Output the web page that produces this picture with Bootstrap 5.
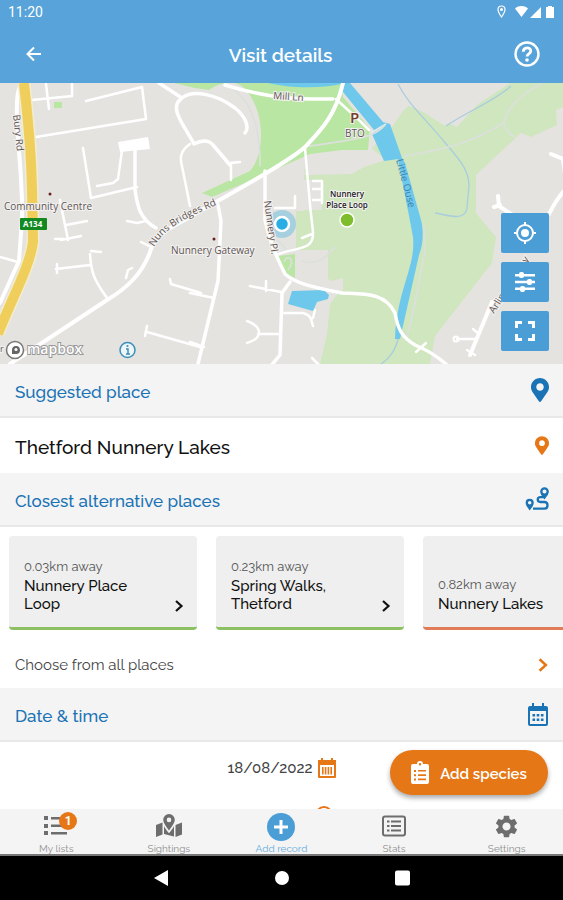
<!DOCTYPE html>
<html lang="en">
<head>
<meta charset="utf-8">
<meta name="viewport" content="width=device-width, initial-scale=1">
<title>Visit details</title>
<link href="https://cdn.jsdelivr.net/npm/bootstrap@5.3.0/dist/css/bootstrap.min.css" rel="stylesheet">
<style>
:root{--sky:#57a3da;--deep:#1a73b5;--orange:#e67717;--ink:#111}
body{font-family:Raleway,"Noto Sans",sans-serif;color:var(--ink);font-size:15px}
svg{display:block;flex-shrink:0}
.app-head{background:var(--sky);color:#fff}
.status-line{height:24px;font:14px Roboto,sans-serif}
.tool-line{height:59px;padding:0 18px 0 16px}
.tool-line h1{font-size:19px;font-weight:600;line-height:24px;padding-top:2px}
.tool-line .btn{color:#fff;border:0}
.map-area{height:281px;background:#e5e3e0}
.map-area text{font-family:"Open Sans",sans-serif;font-size:10px;fill:#5d5555;stroke:#f3f1ef;stroke-width:2px;paint-order:stroke}
.map-tools{top:130px;right:14px;gap:9px}
.map-tools .btn{width:48px;height:40px;background:#4b9dd5;border:0;border-radius:2px;color:#fff}
.side-pad{padding-left:15px;padding-right:14px}
.sect{height:54px;background:#f4f4f4;border-bottom:2px solid #e8e8e8;color:var(--deep)}
.sect h2{font-size:17px;font-weight:500;line-height:24px;padding-top:4px}
.pick-row{height:55px;font-size:19px;font-weight:500}
.pick-row span{padding-top:4px}
.places{gap:19px;padding:9px 9px 12px}
.place{width:188px;height:94px;padding:0 13px 14px 15px;background:#efefef;border-bottom:3px solid #8dc063;border-radius:4px;color:var(--ink);line-height:18px}
.place.far{border-bottom-color:#e07c58}
.place small{font-size:13px;line-height:20px;color:#555}
.place strong{font-size:15px;font-weight:500}
.all-row{height:46px;color:#444}
.date-row{height:52px}
.date-row .btn,.time-row .btn{color:#444;font-size:15px;font-weight:500;gap:5px;border:0}
.time-row{padding-top:12px}
.time-row span{width:80px}
.add-btn{right:15px;bottom:14px;width:158px;height:45px;background:var(--orange);color:#fff;font-size:15px;font-weight:600;box-shadow:0 3px 5px #0005;gap:11px}
.add-btn span{padding-top:3px}
.add-btn:hover{background:#d56c10;color:#fff}
.tabs-bar{height:47px;background:#f4f4f4;border-bottom:2px solid #777}
.tabs-bar a{font-size:10px;line-height:10px;color:#909090;text-decoration:none}
.tabs-bar a svg{color:#6d6d6d}
.tabs-bar a.on{color:#67addd}
.count{left:16px;top:-1px;width:18px;height:18px;background:var(--orange);color:#fff;font:bold 12px/18px Roboto,sans-serif}
.sys-bar{height:44px;background:#000}
</style>
</head>
<body>
<svg width="0" height="0" class="position-absolute" aria-hidden="true"><defs>
<symbol id="pin" viewBox="0 0 384 512"><path fill="currentColor" d="M172.268 501.67C26.97 291.031 0 269.413 0 192 0 85.961 85.961 0 192 0s192 85.961 192 192c0 77.413-26.97 99.031-172.268 309.67-9.535 13.774-29.93 13.773-39.464 0zM192 272c44.183 0 80-35.817 80-80s-35.817-80-80-80-80 35.817-80 80 35.817 80 80 80z"/></symbol>
<symbol id="chev" viewBox="0 0 10 14"><path d="M2 2l5.500 5L2 12" fill="none" stroke="currentColor" stroke-width="2.200"/></symbol>
</defs></svg>
<div class="d-flex flex-column vh-100 overflow-hidden">
<header class="app-head">
  <div class="status-line d-flex align-items-center justify-content-between ps-2 pe-1">
    <span>11:20</span>
    <svg width="62" height="16" viewBox="0 0 62 16" fill="#fff"><path d="M4.500 2C2.300 2 1 3.600 1 5.500c0 2.600 3.500 7.500 3.500 7.500S8 8.100 8 5.500C8 3.600 6.700 2 4.500 2z" fill="none" stroke="#fff" stroke-width="1.200"/><circle cx="4.500" cy="5.600" r="1.500"/><path d="M18 4.500c4-3.200 9-3.200 13 0L24.500 13zM33 14L44 3v11zM49 3h2V2h4v1h2v11h-8z"/></svg>
  </div>
  <div class="tool-line d-flex align-items-center justify-content-between">
    <button class="btn p-2" aria-label="Back"><svg width="20" height="20" viewBox="0 0 20 20" fill="none" stroke="currentColor" stroke-width="2"><path d="M17 10H4M10 3.500L3.500 10l6.500 6.500"/></svg></button>
    <h1 class="mb-0">Visit details</h1>
    <button class="btn p-1" aria-label="Help"><svg width="28" height="28" viewBox="0 0 28 28" fill="none" stroke="currentColor"><circle cx="14" cy="14" r="11.500" stroke-width="2.400"/><path d="M10.300 11.800c0-5.300 7.600-5 7.400-.7-.1 2.800-3.600 2.700-3.600 5.300" stroke-width="2.800"/><circle cx="14" cy="20" r="1.800" fill="currentColor" stroke="none"/></svg></button>
  </div>
</header>
<section class="map-area position-relative flex-shrink-0 overflow-hidden" aria-label="Map">
<svg width="100%" height="100%" viewBox="0 83 563 281" preserveAspectRatio="xMidYMid slice">
  <path fill="#e5e3e0" d="M-400 83h1400v281H-400z"/>
  <path fill="#cfe6bf" d="M563 83v24l-7 3 1 15-26 12-10-4-45 42 0 38 20 24-4 26-57 73-5 28H320l7-30 3-30 12-16-15-10-31-4V211h8V169l56-9 30-30 17-25 50 22 40-44z"/>
  <path fill="#e5e3e0" d="M352 83h158l-65 43-34-22-24 20zM310 154l60-7 16 13-22 7-12 7-48 1zM328 282l15-4v15h-15zM304 180h18v30h-18z"/>
  <path fill="#e5e3e0" d="M295 250h33v42l-20-8-13-10z"/>
  <path fill="#b9e6a2" d="M174 83h168l1 14 27 32-2 21-26 0-32 4-40 18-58 25-10-4 48-22c17-20 14-65-7-84-8-7-24-5-34 3l-14-2zM278 256l17-2v24l-8-4zM54 102h8v6h-8z"/>
  <path fill="#6dc8ec" d="M268 83h82l33 39 7 2 12 34 3 5 16 57c3 12 2 25-2 35l-19 84h-5c2-50 21-72 18-102-3-18-10-51-15-78l-14 2-12-27 2-4-31-38-2-8c-22 5-52 4-73-1zM292 291l32-1 5 5-1 4-11 3-4 9-25-7z"/>
  <path d="M371 133l15-9" stroke="#e1ebee" stroke-width="2"/>
  <g fill="none" stroke="#a9cddd" stroke-width="1.300"><path d="M398 84c10 20 26 33 49 61 15 17 22 27 22 41l-2 22c-2 14-19 7-32 5M511 86c-18 16-43 25-65 40M398 339c-3 12-8 19-18 26"/></g>
  <g fill="none" stroke="#dce0dc" stroke-width="1.800"><path d="M542 84c-23 10-34 25-38 37 0 8 6 14 12 16M303 147c64-9 70-10 82-22M404 156c50-8 72-16 101-34M424 225l1 27c-7 30-8 50-18 84M225 84c30 15 35 50 35 82M302 261c15 4 22-2 27-8l6-6M284 262c4-10 12-1 4 8M273 240c8 1 12 6 13 12"/></g>
  <g fill="none" stroke="#fff" stroke-linejoin="round" stroke-linecap="round">
    <path stroke-width="4" d="M20 87c-9 14 4 90 2 132l-3 42L0 303M343 83c-8 35-25 50-38 64-20 18-83 51-115 70-20 11-35 17-40 35-8 22-23 36-43 48L10 364"/>
    <path stroke-width="3.500" d="M159 83l23 15c10-8 33-5 53 10 10 8 15 19 10 25M225 85c29 9 56 14 86 14h22M265 171v49c4 17 8 30 20 54 10 9 26 13 57 19 21 1 43-1 53 20M395 313c3 17 7 24 20 32 10 4 22 11 32 20M218 205l3 16-3 60-20 83M181 99c-13 9 5 29 13 45 8-4 15-4 19 1l17 20M135 150v40c2 12 3 28 21 38M290 282l-8 11-2 62-10 12"/>
    <path stroke-width="2.500" d="M336 99l24 22 9 9M305 148l5 57 3 27c1 19-16 15-34 22M83 148l8 50 46-11M60 200l8 40M122 150l-4 29-5 4-16 3M36 137l110-18-4-32-56 14M22 101l50-5V84M46 84l3 25M90 254c1 18 4 26 17 44M56 269l34-4M61 240l20-4M66 225l21-4M91 251l10 1M190 144c-13 9-9 18-7 27l7 35M171 284l-1-5 1 5 30 9M145 336l2-10M147 332l53 15M190 293l24 5M190 342l14 5M250 286l31 6M266 281v10M247 321c16 6 16 17 0 22M258 334h22M283 313h20c8 2 8 6 10 13M313 318l2-8M0 257l18 5M302 238l10-4M295 208v-12M275 208l20 0M230 163l10-1M231 164v16M127 221l10 2 9-2M126 278l2-8 4-2M141 242l8 4M313 181h9v22M313 189h9M313 200h9M312 358l8 8M63 239h-8M57 273v-9"/>
    <path stroke-width="4" d="M498 196l1 10 12 8M494 207l6-2M549 214c6-12 10-18 16-24M551 154l12 5 2 14M492 302l-22 53"/>
    <path stroke-width="2.500" d="M416 352l10-9M457 339h20M473 329l6 5M467 350l8 5"/><circle cx="456" cy="339" r="2.500" stroke-width="2"/>
  </g>
  <path fill="#fff" d="M118 142l30-5 2 12-30 3z"/>
  <path d="M24 83c8 72 8 94 9 159-3 25-23 60-35 92" fill="none" stroke="#f3edcf" stroke-width="13"/><path d="M24 83c8 72 8 94 9 159-3 25-23 60-35 92" fill="none" stroke="#efce5c" stroke-width="10"/>
  <text x="4" y="210">Community Centre</text><circle cx="50" cy="194" r="1.500" fill="#622"/>
  <text transform="translate(13 115) rotate(84)">Bury Rd</text>
  <rect x="20" y="218" width="27" height="12" rx="1" fill="#138a21"/><text x="23" y="227" style="font-size:8px;font-weight:700;fill:#fff;stroke:none">A134</text>
  <path id="nuns" fill="none" d="M154 247c10-18 28-28 72-46"/><text><textPath href="#nuns">Nuns Bridges Rd</textPath></text>
  <text x="171" y="254">Nunnery Gateway</text><circle cx="214" cy="239" r="1.500" fill="#622"/>
  <text transform="translate(273 99) rotate(4)">Mill Ln</text>
  <circle cx="282" cy="224" r="14" fill="#73c1de" opacity=".55"/>
  <text transform="translate(264 201) rotate(82)">Nunnery Pl.</text>
  <text x="350" y="123" style="font-size:15px;font-weight:600;fill:#713d25">P</text><text x="345" y="137">BTO</text>
  <text transform="translate(396 160) rotate(75)" style="fill:#3e82ad;stroke:none">Little Ouse</text>
  <text transform="translate(494 314) rotate(-57)">Arlington Way</text>
  <text x="347" y="197" text-anchor="middle" style="font-size:8px;font-weight:600;fill:#222">Nunnery</text><text x="347" y="208" text-anchor="middle" style="font-size:8px;font-weight:600;fill:#222">Place Loop</text>
  <circle cx="347" cy="220" r="7" fill="#7ebd2b" stroke="#fff" stroke-width="1.500"/>
  <circle cx="282" cy="224" r="7" fill="#28aee5" stroke="#fff" stroke-width="2.500"/>
  <text x="0" y="352" style="font-size:9px">r</text><circle cx="15" cy="350" r="8.500" fill="#fff" stroke="#777" stroke-width="1.500"/><path d="M12 354v-4.500a4 4 0 1 1 4 4.500z" fill="#666"/><circle cx="16" cy="349.500" r="1.500" fill="#fff"/>
  <text x="27" y="354" style="font-size:14px;font-weight:600;fill:#fff;stroke:#999">mapbox</text>
  <circle cx="127.500" cy="350" r="7.500" fill="#eef5f7" stroke="#3c8fb9" stroke-width="1.500"/><path d="M126 349h2v5m-2 0h4" fill="none" stroke="#3c8fb9" stroke-width="1.500"/><circle cx="127.500" cy="346" r="1.100" fill="#3c8fb9"/>
</svg>
<div class="map-tools position-absolute d-flex flex-column">
  <button class="btn p-0 d-flex align-items-center justify-content-center" aria-label="My location"><svg width="24" height="24" viewBox="0 0 24 24" fill="none" stroke="currentColor" stroke-width="2"><circle cx="12" cy="12" r="8"/><circle cx="12" cy="12" r="4" fill="currentColor" stroke="none"/><path d="M12 1v4M12 19v4M1 12h4M19 12h4"/></svg></button>
  <button class="btn p-0 d-flex align-items-center justify-content-center" aria-label="Map layers"><svg width="24" height="24" viewBox="0 0 24 24" fill="currentColor"><path d="M2 4h20v2.500H2zM2 10.800h20v2.500H2zM2 17.500h20V20H2z"/><rect x="6" y="2" width="5" height="6" rx="2"/><rect x="14" y="9" width="5" height="6" rx="2"/><rect x="7" y="16" width="5" height="6" rx="2"/></svg></button>
  <button class="btn p-0 d-flex align-items-center justify-content-center" aria-label="Full screen"><svg width="24" height="24" viewBox="0 0 24 24" fill="none" stroke="currentColor" stroke-width="3"><path d="M3.500 9V3.500H9M15 3.500h5.500V9M20.500 15v5.500H15M9 20.500H3.500V15"/></svg></button>
</div>
</section>
<main class="position-relative flex-grow-1 overflow-hidden">
  <div class="sect side-pad d-flex align-items-center justify-content-between"><h2 class="mb-0">Suggested place</h2><svg width="18" height="24"><use href="#pin"/></svg></div>
  <div class="pick-row side-pad d-flex align-items-center justify-content-between"><span>Thetford Nunnery Lakes</span><svg width="14" height="19" color="#e67717"><use href="#pin"/></svg></div>
  <div class="sect side-pad d-flex align-items-center justify-content-between"><h2 class="mb-0">Closest alternative places</h2><svg width="24" height="26" viewBox="2 0 24 26" fill="none" stroke="currentColor" stroke-width="2.300"><circle cx="21.500" cy="5.500" r="3.200"/><path d="M18.700 7.500l2.800 4 2.800-4M4.300 19l2.400 3.500L9.100 19"/><circle cx="6.700" cy="16.700" r="2.900"/><path d="M21.500 11.200h-4c-3.700 0-3.700 4.800 0 4.800h3.800c4.300 0 4.300 6.700 0 6.700H10"/></svg></div>
  <div class="places d-flex overflow-hidden">
    <a href="#" class="place flex-shrink-0 d-flex align-items-end justify-content-between text-decoration-none"><span><small class="d-block">0.03km away</small><strong>Nunnery Place<br>Loop</strong></span><svg width="10" height="14"><use href="#chev"/></svg></a>
    <a href="#" class="place flex-shrink-0 d-flex align-items-end justify-content-between text-decoration-none"><span><small class="d-block">0.23km away</small><strong>Spring Walks,<br>Thetford</strong></span><svg width="10" height="14"><use href="#chev"/></svg></a>
    <a href="#" class="place far flex-shrink-0 d-flex align-items-end justify-content-between text-decoration-none"><span><small class="d-block">0.82km away</small><strong>Nunnery Lakes</strong></span><svg width="10" height="14"><use href="#chev"/></svg></a>
  </div>
  <a href="#" class="all-row side-pad d-flex align-items-center justify-content-between text-decoration-none"><span>Choose from all places</span><svg width="12" height="16" color="#e67717"><use href="#chev"/></svg></a>
  <div class="sect side-pad d-flex align-items-center justify-content-between"><h2 class="mb-0">Date &amp; time</h2><svg width="22" height="25" viewBox="0 0 22 25" fill="currentColor"><path fill-rule="evenodd" d="M5 1h2v3h8V1h2v3h2q2 0 2 2v16q0 2-2 2H3q-2 0-2-2V6q0-2 2-2h2zM3 9v13h16V9z"/><path d="M5.500 12h2.600v2.400H5.500zm4.200 0h2.600v2.400H9.700zm4.200 0h2.600v2.400h-2.600zM5.500 16.500h2.600v2.400H5.500zm4.200 0h2.600v2.400H9.700zm4.200 0h2.600v2.400h-2.600z"/></svg></div>
  <div class="date-row d-flex align-items-center justify-content-center"><button class="btn p-0 d-flex align-items-center"><span>18/08/2022</span><svg width="18" height="20" viewBox="0 0 18 20" fill="#e67717"><path fill-rule="evenodd" d="M3 0h2v2h8V0h2v2h3v17q0 1-1 1H1q-1 0-1-1V2h3zM2 7v11h14V7z"/><path d="M4 9h1.600v7.500H4zm2.800 0h1.600v7.500H6.800zm2.800 0h1.600v7.500H9.600zm2.800 0H14v7.500h-1.600z"/></svg></button></div>
  <div class="time-row d-flex justify-content-center"><button class="btn p-0 d-flex align-items-center" aria-label="Choose time"><span></span><svg width="18" height="18" viewBox="0 0 18 18" fill="none" stroke="#e67717" stroke-width="2"><circle cx="9" cy="9" r="8"/><path d="M9 4v5l3 2"/></svg></button></div>
  <button class="add-btn btn rounded-pill position-absolute d-flex align-items-center justify-content-center p-0"><svg width="18" height="24" viewBox="0 0 18 24" fill="currentColor"><path fill-rule="evenodd" d="M2 3h4a3 3 0 0 1 6 0h4q2 0 2 2v16q0 2-2 2H2q-2 0-2-2V5q0-2 2-2zm7-1a1.200 1.200 0 1 0 0 2.400A1.200 1.200 0 0 0 9 2zM3 9v2h2V9zm0 4.200v2h2v-2zm0 4.300v2h2v-2zM7 9v1.600h8V9zm0 4.300v1.600h8v-1.600zm0 4.300v1.600h8v-1.600z"/></svg><span>Add species</span></button>
</main>
<nav class="tabs-bar d-flex flex-shrink-0" aria-label="Main">
  <a href="#" class="d-flex flex-column align-items-center justify-content-between w-100 pt-1"><span class="position-relative"><svg width="26" height="27" viewBox="0 0 26 27" fill="currentColor"><path d="M1 3h4v4H1zm0 8h4v4H1zm0 7h4v4H1zM8 4h16v2.400H8zm0 7.500h16v2.400H8zM8 19h16v2.400H8z"/></svg><span class="count position-absolute rounded-circle text-center">1</span></span>My lists</a>
  <a href="#" class="d-flex flex-column align-items-center justify-content-between w-100 pt-1"><svg width="28" height="27" viewBox="0 0 28 27" fill="currentColor"><path fill-rule="evenodd" d="M14 1a5.800 5.800 0 0 0-5.800 5.800C8.200 10.500 14 17.500 14 17.500s5.800-7 5.800-10.700A5.800 5.800 0 0 0 14 1zm0 3.600A2.300 2.300 0 1 1 14 9.200 2.300 2.300 0 0 1 14 4.600z"/><path d="M1 12l6.500-2.500v12L1 24zM9 13c1.300 3 5 7.200 5 7.200s3.700-4.200 5-7.200v10.500l-10-2.500zM20.500 12L27 9.500v12L20.500 24z"/></svg>Sightings</a>
  <a href="#" class="on d-flex flex-column align-items-center justify-content-between w-100 pt-1"><svg width="28" height="28" viewBox="0 0 28 28"><circle cx="14" cy="14" r="14" fill="#4b9dd5"/><path d="M14 7v14M7 14h14" stroke="#fff" stroke-width="3"/></svg>Add record</a>
  <a href="#" class="d-flex flex-column align-items-center justify-content-between w-100 pt-1"><svg width="26" height="27" viewBox="0 0 26 27" fill="none" stroke="currentColor" stroke-width="2"><rect x="2" y="3.500" width="22" height="19" rx="2"/><path d="M6 8.500h2.500M6 13h2.500M6 17.500h2.500M10 8.500h10M10 13h10M10 17.500h10"/></svg>Stats</a>
  <a href="#" class="d-flex flex-column align-items-center justify-content-between w-100 pt-1"><svg width="27" height="27" viewBox="0 0 24 24" fill="currentColor"><path d="M19.140 12.940c.04-.3.060-.61.060-.94 0-.32-.02-.64-.07-.94l2.030-1.580c.18-.14.23-.41.12-.61l-1.920-3.320c-.12-.22-.37-.29-.59-.22l-2.390.96c-.5-.38-1.030-.7-1.620-.94l-.36-2.540c-.04-.24-.24-.41-.48-.41h-3.840c-.24 0-.43.17-.47.41l-.36 2.540c-.59.24-1.130.57-1.620.94l-2.390-.96c-.22-.08-.47 0-.59.22L2.740 8.870c-.12.21-.08.47.12.61l2.030 1.580c-.05.3-.09.63-.09.94s.02.64.07.94l-2.030 1.580c-.18.14-.23.41-.12.61l1.920 3.320c.12.22.37.29.59.22l2.390-.96c.5.38 1.030.7 1.620.94l.36 2.540c.05.24.24.41.48.41h3.840c.24 0 .44-.17.47-.41l.36-2.540c.59-.24 1.130-.56 1.620-.94l2.390.96c.22.08.47 0 .59-.22l1.920-3.320c.12-.22.07-.47-.12-.61l-2.010-1.580zM12 15.600c-1.980 0-3.600-1.620-3.600-3.600s1.620-3.600 3.600-3.600 3.600 1.620 3.600 3.600-1.620 3.600-3.600 3.600z"/></svg>Settings</a>
</nav>
<footer class="sys-bar d-flex flex-shrink-0 align-items-center justify-content-center">
  <svg width="258" height="18" viewBox="0 0 258 18" fill="#fff"><path d="M15 1v16L1 9z"/><circle cx="129" cy="9" r="7"/><rect x="242" y="1.500" width="15" height="15" rx="2"/></svg>
</footer>
</div>
<script src="https://cdn.jsdelivr.net/npm/bootstrap@5.3.0/dist/js/bootstrap.bundle.min.js"></script>
</body>
</html>
